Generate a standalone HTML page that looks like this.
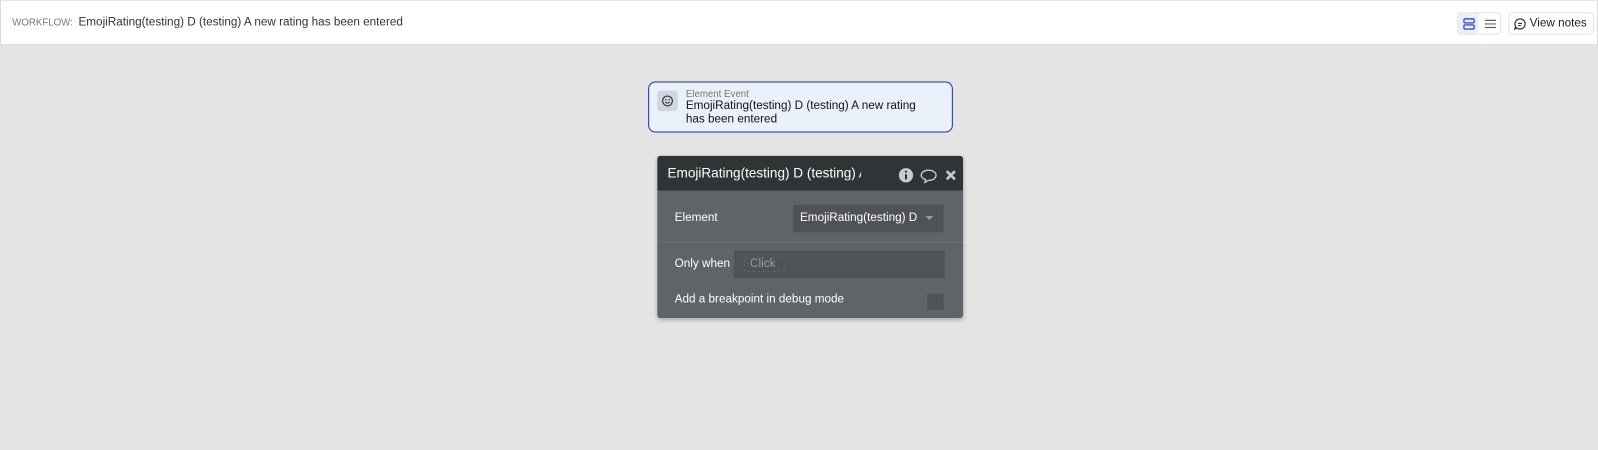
<!DOCTYPE html>
<html><head><style>
*{margin:0;padding:0;box-sizing:border-box}
body{width:1598px;height:450px;background:#e4e4e4;font-family:"Liberation Sans",sans-serif;position:relative;overflow:hidden}
.w{position:absolute;left:0;top:0;width:1568px;height:442px;transform:scale(1.0191);transform-origin:0 0}
.top{position:absolute;left:0;top:0;width:1568px;height:44px;background:#fff;border:1px solid #ddd;border-top:1px solid #e6e6e6}
.a{position:absolute;white-space:nowrap}
</style></head><body><div class="w">
<div class="top">
 <div class="a" style="left:11px;top:16px;font-size:9.5px;color:#777">WORKFLOW:</div>
 <div class="a" style="left:76px;top:15px;font-size:11.5px;color:#333">EmojiRating(testing) D (testing) A new rating has been entered</div>
 <div class="a" style="left:1429px;top:11px;width:43px;height:22px;border:1px solid #e2e2e2;border-radius:4px;background:#fff">
  <div class="a" style="left:0;top:0;width:20px;height:20px;background:#e9effb"></div>
  <svg class="a" style="left:4px;top:4px" width="13" height="13"><rect x="1.5" y="1.5" width="10" height="4" rx="1" fill="none" stroke="#3b55c8" stroke-width="1.4"/><rect x="1.5" y="7.5" width="10" height="4" rx="1" fill="none" stroke="#3b55c8" stroke-width="1.4"/></svg>
  <svg class="a" style="left:25px;top:4px" width="13" height="13"><path d="M1 3h11M1 6.5h11M1 10h11" stroke="#666" stroke-width="1.2"/></svg>
 </div>
 <div class="a" style="left:1479px;top:11px;width:84px;height:22px;border:1px solid #e2e2e2;border-radius:4px;background:#fff">
  <svg class="a" style="left:4px;top:4px" width="13" height="13"><path d="M6.5 1.5a5 5 0 1 1-3.2 8.8L1.5 11.5l.7-2.6A5 5 0 0 1 6.5 1.5z" fill="none" stroke="#333" stroke-width="1.2"/><path d="M4.5 6h4M4.5 8h3" stroke="#333" stroke-width="1"/></svg>
  <div class="a" style="left:20px;top:4px;font-size:11.5px;color:#222">View notes</div>
 </div>
</div>
<div class="a" style="left:636px;top:80px;width:299px;height:50px;background:#eaf1fb;border:1px solid #22359a;border-radius:7px">
 <div class="a" style="left:8px;top:8px;width:20px;height:20px;background:#cfd6e0;border-radius:3px"></div>
 <svg class="a" style="left:12px;top:12px" width="12" height="12"><circle cx="6" cy="6" r="4.8" fill="none" stroke="#333" stroke-width="1.1"/><circle cx="4.3" cy="5" r=".7" fill="#333"/><circle cx="7.7" cy="5" r=".7" fill="#333"/><path d="M3.8 7.2q2.2 2 4.4 0" fill="none" stroke="#333" stroke-width="1"/></svg>
 <div class="a" style="left:36px;top:6px;font-size:9.5px;color:#777">Element Event</div>
 <div class="a" style="left:36px;top:17px;font-size:11.5px;color:#111;line-height:13px">EmojiRating(testing) D (testing) A new rating<br>has been entered</div>
</div>
<div class="a" style="left:645px;top:153px;width:300px;height:159px;background:#5f6468;border-radius:3px;box-shadow:0 2px 4px rgba(0,0,0,.25);overflow:hidden">
 <div class="a" style="left:0;top:0;width:300px;height:34px;background:#2f3437"></div>
 <div class="a" style="left:10px;top:9px;font-size:13.3px;color:#fff;width:190px;overflow:hidden">EmojiRating(testing) D (testing) A new</div>
 <svg class="a" style="left:236px;top:11px" width="62" height="16"><circle cx="8" cy="8" r="7" fill="#c9cccd"/><rect x="7" y="7" width="2" height="5" fill="#2f3437"/><circle cx="8" cy="4.5" r="1.1" fill="#2f3437"/><path d="M30 3c4.5 0 7.5 2.2 7.5 5s-3 5-7.5 5l-3.5 2 .8-2.7C25 11.5 23 10 23 8c0-2.8 3-5 7-5z" fill="none" stroke="#c9cccd" stroke-width="1.3"/><path d="M48 4l8 8M56 4l-8 8" stroke="#c9cccd" stroke-width="2.6"/></svg>
 <div class="a" style="left:17px;top:55px;font-size:11.5px;color:#fff">Element</div>
 <div class="a" style="left:133px;top:48px;width:148px;height:27px;background:#4f5356"></div>
 <div class="a" style="left:140px;top:55px;font-size:11.5px;color:#fff">EmojiRating(testing) D</div>
 <div class="a" style="left:263px;top:59px;width:0;height:0;border-left:4px solid transparent;border-right:4px solid transparent;border-top:4px solid #999"></div>
 <div class="a" style="left:0;top:84px;width:300px;height:1px;background:#6e7276"></div>
 <div class="a" style="left:17px;top:100px;font-size:11.5px;color:#fff">Only when</div>
 <div class="a" style="left:75px;top:93px;width:207px;height:27px;background:#4f5356"></div>
 <div class="a" style="left:85px;top:99px;width:40px;height:15px;border:1px dashed #5f6468;border-radius:2px"></div>
 <div class="a" style="left:91px;top:100px;font-size:11.5px;color:#999">Click</div>
 <div class="a" style="left:17px;top:135px;font-size:11.5px;color:#fff">Add a breakpoint in debug mode</div>
 <div class="a" style="left:265px;top:135px;width:16px;height:16px;background:#4f5356"></div>
</div>
</div></body></html>
